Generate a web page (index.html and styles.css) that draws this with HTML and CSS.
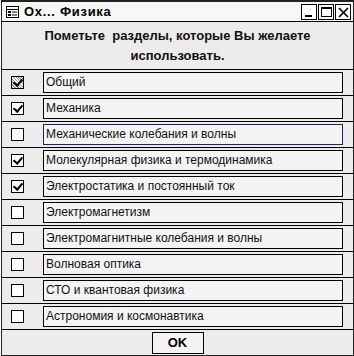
FILE: index.html
```html
<!DOCTYPE html>
<html lang="ru">
<head>
<meta charset="UTF-8">
<title>Физика</title>
<link rel="stylesheet" href="styles.css">
</head>
<body>
<div class="window">
    <div class="titlebar">
        <svg class="app-icon" width="13" height="12" viewBox="0 0 13 12">
            <rect x="0.5" y="0.5" width="12" height="11" fill="#fff" stroke="#000"/>
            <line x1="0" y1="3.5" x2="13" y2="3.5" stroke="#000"/>
            <rect x="2" y="5" width="3" height="2" fill="#000"/>
            <rect x="2" y="8" width="3" height="2" fill="#000"/>
            <line x1="6" y1="6" x2="11" y2="6" stroke="#000"/>
            <line x1="6" y1="9" x2="11" y2="9" stroke="#000"/>
        </svg>
        <span class="title">Ох... Физика</span>
        <div class="controls">
            <span class="ctl"><svg width="15" height="15"><rect x="3" y="10" width="7" height="2" fill="#000"/></svg></span>
            <span class="ctl"><svg width="15" height="15"><rect x="2.5" y="2.5" width="10" height="9" fill="none" stroke="#000"/><line x1="2" y1="3.5" x2="13" y2="3.5" stroke="#000"/></svg></span>
            <span class="ctl"><svg width="15" height="15"><path d="M3 3 L12 12 M12 3 L3 12" stroke="#000" stroke-width="1.6"/></svg></span>
        </div>
    </div>
    <div class="header">
        <p>Пометьте&nbsp; разделы, которые Вы желаете</p>
        <p>использовать.</p>
    </div>
    <ul class="list">
        <li class="row"><span class="check checked focus"></span><span class="field">Общий</span></li>
        <li class="row"><span class="check checked"></span><span class="field">Механика</span></li>
        <li class="row"><span class="check"></span><span class="field active">Механические колебания и волны</span></li>
        <li class="row"><span class="check checked"></span><span class="field">Молекулярная физика и термодинамика</span></li>
        <li class="row"><span class="check checked"></span><span class="field">Электростатика и постоянный ток</span></li>
        <li class="row"><span class="check"></span><span class="field">Электромагнетизм</span></li>
        <li class="row"><span class="check"></span><span class="field">Электромагнитные колебания и волны</span></li>
        <li class="row"><span class="check"></span><span class="field">Волновая оптика</span></li>
        <li class="row"><span class="check"></span><span class="field">СТО и квантовая физика</span></li>
        <li class="row"><span class="check"></span><span class="field">Астрономия и космонавтика</span></li>
    </ul>
    <div class="footer">
        <button class="btn">OK</button>
    </div>
</div>
</body>
</html>
```

FILE: styles.css
```css
* {
    margin: 0;
    padding: 0;
    box-sizing: border-box;
}

body {
    font-family: "Liberation Sans", Arial, sans-serif;
    background-color: #fff;
}

.window {
    width: 353px;
    height: 356px;
    margin: 0 0 0 1px;
    border: 1px solid #222;
    border-top: 2px solid #222;
    background-color: #ececec;
    display: flex;
    flex-direction: column;
}

.titlebar {
    height: 20px;
    display: flex;
    align-items: center;
    background-color: #f7f7f7;
    border-bottom: 1px solid #000;
    padding-left: 4px;
}

.app-icon {
    margin-right: 5px;
}

.title {
    font-weight: bold;
    font-size: 13px;
    letter-spacing: 0.7px;
    flex: 1;
}

.controls {
    display: flex;
    gap: 1px;
    margin-right: 2px;
}

.ctl {
    width: 16px;
    height: 16px;
    border: 1px solid #000;
    background-color: #fff;
    display: flex;
}

.ctl svg {
    display: block;
}

.header {
    height: 47px;
    padding-top: 4px;
    text-align: center;
    font-weight: bold;
    font-size: 13px;
    line-height: 20px;
    color: #111;
}

.list {
    list-style-type: none;
}

.row {
    height: 26px;
    border-top: 1px solid #000;
    display: flex;
    align-items: center;
    padding-left: 9px;
}

.check {
    width: 13px;
    height: 13px;
    border: 1px solid #000;
    background-color: #fff;
    margin-right: 19px;
    position: relative;
}

.check.checked::after {
    content: "";
    position: absolute;
    left: 3px;
    top: 0px;
    width: 4px;
    height: 7px;
    border-right: 2px solid #000;
    border-bottom: 2px solid #000;
    transform: rotate(40deg);
}

.check.focus {
    background-image: repeating-linear-gradient(45deg, #999 0 1px, #fff 1px 2px);
}

.field {
    width: 300px;
    height: 21px;
    border: 1px solid #000;
    background-color: #f4f4f4;
    font-size: 12px;
    line-height: 19px;
    padding-left: 2px;
    color: #111;
}

.field.active {
    border-color: #2a2060;
}

.footer {
    flex: 1;
    border-top: 1px solid #000;
    display: flex;
    justify-content: center;
    align-items: center;
}

.btn {
    width: 52px;
    height: 22px;
    border: 1px solid #000;
    background-color: #f4f4f4;
    font-family: "Liberation Sans", Arial, sans-serif;
    font-weight: bold;
    font-size: 13px;
}
```
